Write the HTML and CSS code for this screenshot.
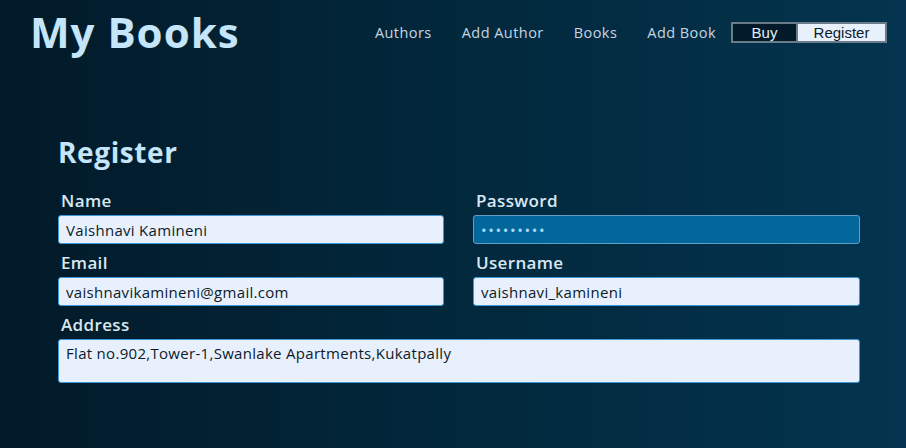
FILE: index.html
```html
<!DOCTYPE html>
<html lang="en">
<head>
<meta charset="utf-8">
<title>My Books</title>
<link rel="stylesheet" href="styles.css">
</head>
<body>
<header class="topbar">
  <h1 class="brand">My Books</h1>
  <nav class="nav">
    <a class="nav-link" href="#">Authors</a>
    <a class="nav-link" href="#">Add Author</a>
    <a class="nav-link" href="#">Books</a>
    <a class="nav-link" href="#">Add Book</a>
    <div class="btn-group">
      <button class="btn btn-dark">Buy</button>
      <button class="btn btn-light">Register</button>
    </div>
  </nav>
</header>
<main class="form-wrap">
  <h2 class="form-title">Register</h2>
  <form class="form-grid">
    <div class="field">
      <label class="label">Name</label>
      <input class="input" type="text" value="Vaishnavi Kamineni">
    </div>
    <div class="field">
      <label class="label">Password</label>
      <input class="input input-active" type="password" value="*********">
    </div>
    <div class="field">
      <label class="label">Email</label>
      <input class="input" type="text" value="vaishnavikamineni@gmail.com">
    </div>
    <div class="field">
      <label class="label">Username</label>
      <input class="input" type="text" value="vaishnavi_kamineni">
    </div>
    <div class="field field-wide">
      <label class="label">Address</label>
      <textarea class="input textarea">Flat no.902,Tower-1,Swanlake Apartments,Kukatpally</textarea>
    </div>
  </form>
</main>
</body>
</html>
```
FILE: styles.css
```css
html, body {
  margin: 0;
  height: 100%;
}
body {
  background: linear-gradient(90deg, #021a29 0%, #02283c 50%, #04344f 100%);
  font-family: "Open Sans", "Lato", sans-serif;
  color: #d6e4ee;
  overflow: hidden;
}
.topbar {
  display: flex;
  align-items: flex-start;
  justify-content: space-between;
  padding: 7px 19px 0 30px;
}
.brand {
  margin: 0;
  font-size: 42px;
  line-height: 50px;
  font-weight: 700;
  color: #c4e5fa;
  letter-spacing: 1px;
}
.nav {
  display: flex;
  align-items: center;
  margin-top: 15px;
}
.nav-link {
  color: #c6d5e2;
  text-decoration: none;
  font-size: 14.5px;
  font-weight: 400;
  letter-spacing: 0.45px;
  padding: 0 15px;
  line-height: 20px;
}
.btn-group {
  display: flex;
}
.btn {
  font-family: "Liberation Sans", Arial, sans-serif;
  font-size: 15px;
  height: 21px;
  padding: 0;
  border: 2px solid #6b7c89;
  border-radius: 0;
  line-height: 17px;
}
.btn-dark {
  width: 65px;
  background: #021a29;
  color: #e6eef5;
  border-right: none;
}
.btn-light {
  width: 91px;
  background: #e9f1fc;
  color: #0c1c2a;
}
.form-wrap {
  padding: 0 46px 0 58px;
  margin-top: 78px;
}
.form-title {
  margin: 0 0 13px 0;
  font-size: 28px;
  line-height: 34px;
  font-weight: 700;
  letter-spacing: 0.6px;
  color: #c4e5fa;
}
.form-grid {
  display: grid;
  grid-template-columns: 386px 387px;
  column-gap: 29px;
}
.field {
  display: flex;
  flex-direction: column;
}
.field-wide {
  grid-column: 1 / span 2;
}
.label {
  margin: 9px 0 4px 3px;
  font-size: 17px;
  line-height: 20px;
  font-weight: 600;
  letter-spacing: 0.35px;
  color: #d9e7f1;
}
.input {
  box-sizing: border-box;
  height: 29px;
  margin: 0;
  padding: 0 7px;
  background: #e8f0fd;
  border: 1px solid #3d98d8;
  border-radius: 3px;
  font-family: "Open Sans", sans-serif;
  font-size: 15px;
  letter-spacing: 0.3px;
  color: #0b1b29;
  outline: none;
}
.input-active {
  background: #03679c;
  border-color: #5f9ec6;
  color: #a8d9f6;
  letter-spacing: 1.6px;
}
.textarea {
  height: 44px;
  padding-top: 3px;
  resize: none;
  line-height: 20px;
}
```
